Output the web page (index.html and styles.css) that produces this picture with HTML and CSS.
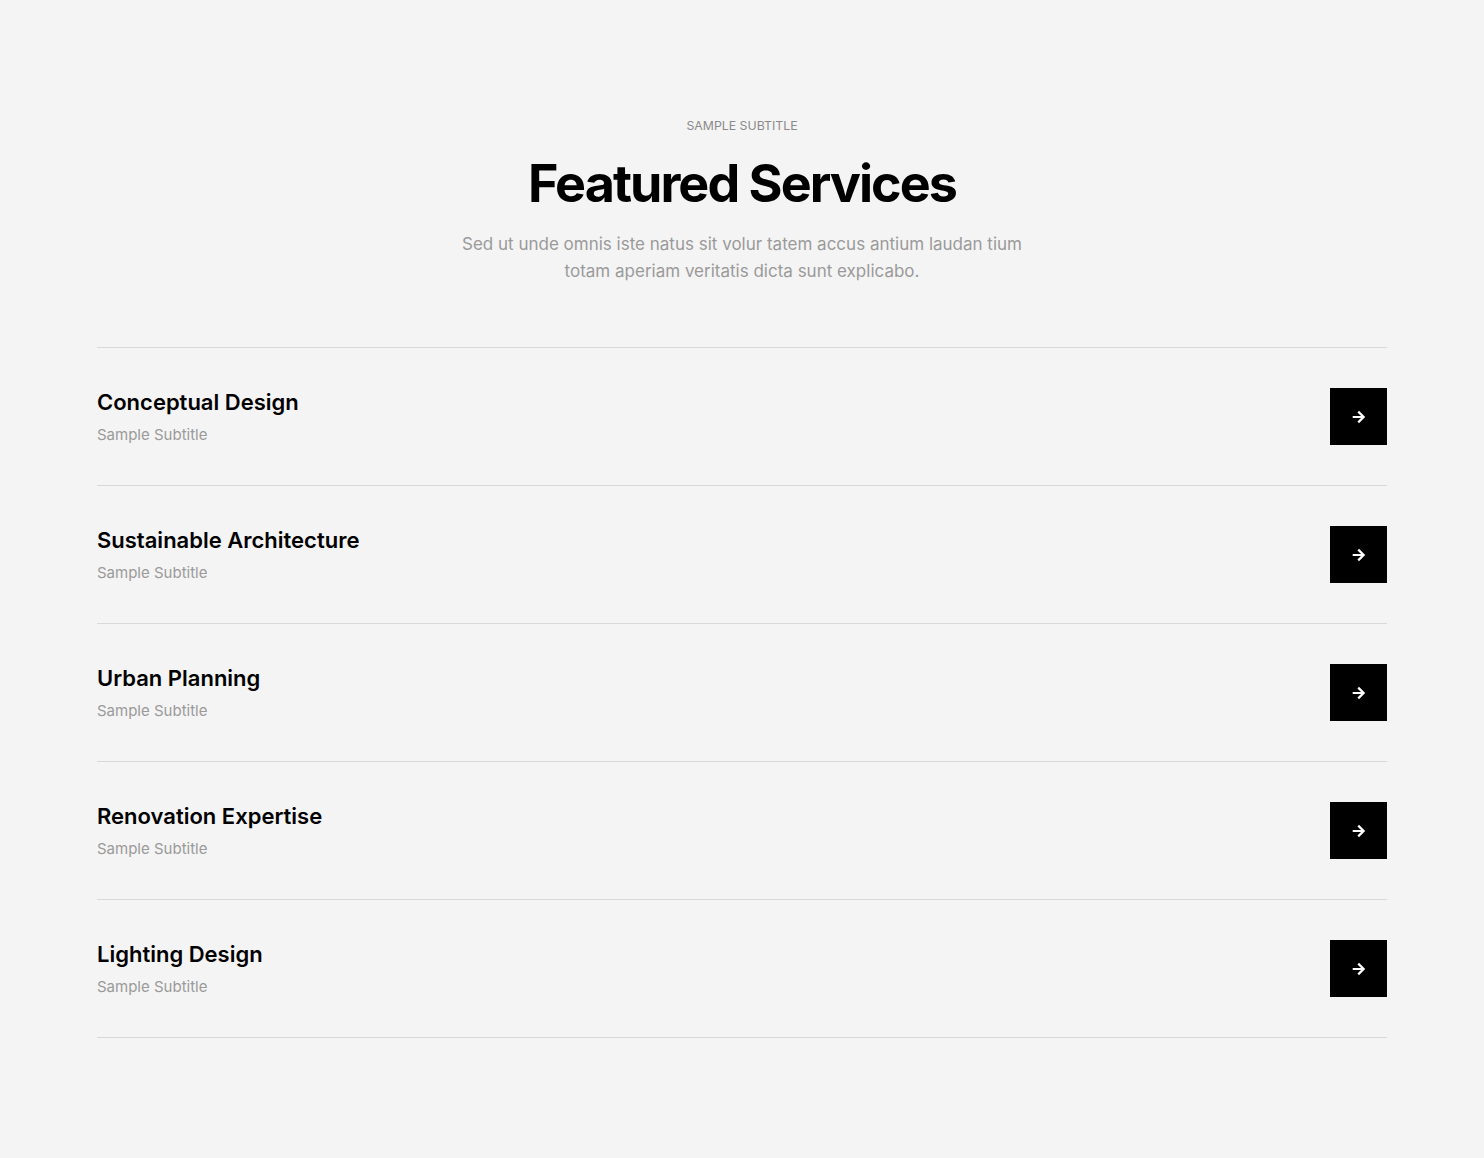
FILE: index.html
```html
<!DOCTYPE html>
<html lang="en">
<head>
<meta charset="utf-8">
<title>Featured Services</title>
<link rel="stylesheet" href="styles.css">
</head>
<body>
<section class="services">
  <header class="intro">
    <p class="eyebrow">Sample Subtitle</p>
    <h1 class="heading">Featured Services</h1>
    <p class="lead">Sed ut unde omnis iste natus sit volur tatem accus antium laudan tium totam aperiam veritatis dicta sunt explicabo.</p>
  </header>
  <ul class="list">
    <li class="item">
      <div class="text"><h3 class="title">Conceptual Design</h3><p class="sub">Sample Subtitle</p></div>
      <a class="btn" href="#" aria-label="Open"><svg viewBox="0 0 14 14" width="14" height="14"><path d="M1.8 7h9.6M7 2.4 11.6 7 7 11.6" fill="none" stroke="#fff" stroke-width="2.2" stroke-linecap="square"/></svg></a>
    </li>
    <li class="item">
      <div class="text"><h3 class="title">Sustainable Architecture</h3><p class="sub">Sample Subtitle</p></div>
      <a class="btn" href="#" aria-label="Open"><svg viewBox="0 0 14 14" width="14" height="14"><path d="M1.8 7h9.6M7 2.4 11.6 7 7 11.6" fill="none" stroke="#fff" stroke-width="2.2" stroke-linecap="square"/></svg></a>
    </li>
    <li class="item">
      <div class="text"><h3 class="title">Urban Planning</h3><p class="sub">Sample Subtitle</p></div>
      <a class="btn" href="#" aria-label="Open"><svg viewBox="0 0 14 14" width="14" height="14"><path d="M1.8 7h9.6M7 2.4 11.6 7 7 11.6" fill="none" stroke="#fff" stroke-width="2.2" stroke-linecap="square"/></svg></a>
    </li>
    <li class="item">
      <div class="text"><h3 class="title">Renovation Expertise</h3><p class="sub">Sample Subtitle</p></div>
      <a class="btn" href="#" aria-label="Open"><svg viewBox="0 0 14 14" width="14" height="14"><path d="M1.8 7h9.6M7 2.4 11.6 7 7 11.6" fill="none" stroke="#fff" stroke-width="2.2" stroke-linecap="square"/></svg></a>
    </li>
    <li class="item">
      <div class="text"><h3 class="title">Lighting Design</h3><p class="sub">Sample Subtitle</p></div>
      <a class="btn" href="#" aria-label="Open"><svg viewBox="0 0 14 14" width="14" height="14"><path d="M1.8 7h9.6M7 2.4 11.6 7 7 11.6" fill="none" stroke="#fff" stroke-width="2.2" stroke-linecap="square"/></svg></a>
    </li>
  </ul>
</section>
</body>
</html>
```
FILE: styles.css
```css
* { box-sizing: border-box; }
html, body { margin: 0; padding: 0; }
body {
  background: #f4f4f4;
  font-family: Inter, "Noto Sans", sans-serif;
  color: #000;
}
.services {
  width: 1290px;
  margin: 0 auto;
  padding: 118px 0 120px;
}
.intro {
  display: flex;
  flex-direction: column;
  align-items: center;
  text-align: center;
}
.eyebrow {
  margin: 0;
  font-size: 12.3px;
  line-height: 16px;
  text-transform: uppercase;
  color: #8a8a8a;
}
.heading {
  margin: 20px 0 0;
  font-size: 52px;
  line-height: 60px;
  font-weight: 700;
  letter-spacing: -1.95px;
}
.lead {
  margin: 17px 0 0;
  width: 562px;
  font-size: 17px;
  line-height: 27px;
  color: #9a9a9a;
}
.list {
  list-style: none;
  margin: 62px 0 0;
  padding: 0;
  border-bottom: 1px solid #d9d9d9;
}
.item {
  display: flex;
  align-items: center;
  justify-content: space-between;
  border-top: 1px solid #d9d9d9;
  padding: 40px 0;
}
.title {
  margin: 0;
  font-size: 22px;
  line-height: 28px;
  font-weight: 600;
  letter-spacing: 0;
}
.sub {
  margin: 9px 0 0;
  font-size: 15px;
  line-height: 20px;
  color: #9a9a9a;
}
.btn {
  width: 57px;
  height: 57px;
  background: #000;
  display: flex;
  align-items: center;
  justify-content: center;
}
.btn svg { display: block; }
```
